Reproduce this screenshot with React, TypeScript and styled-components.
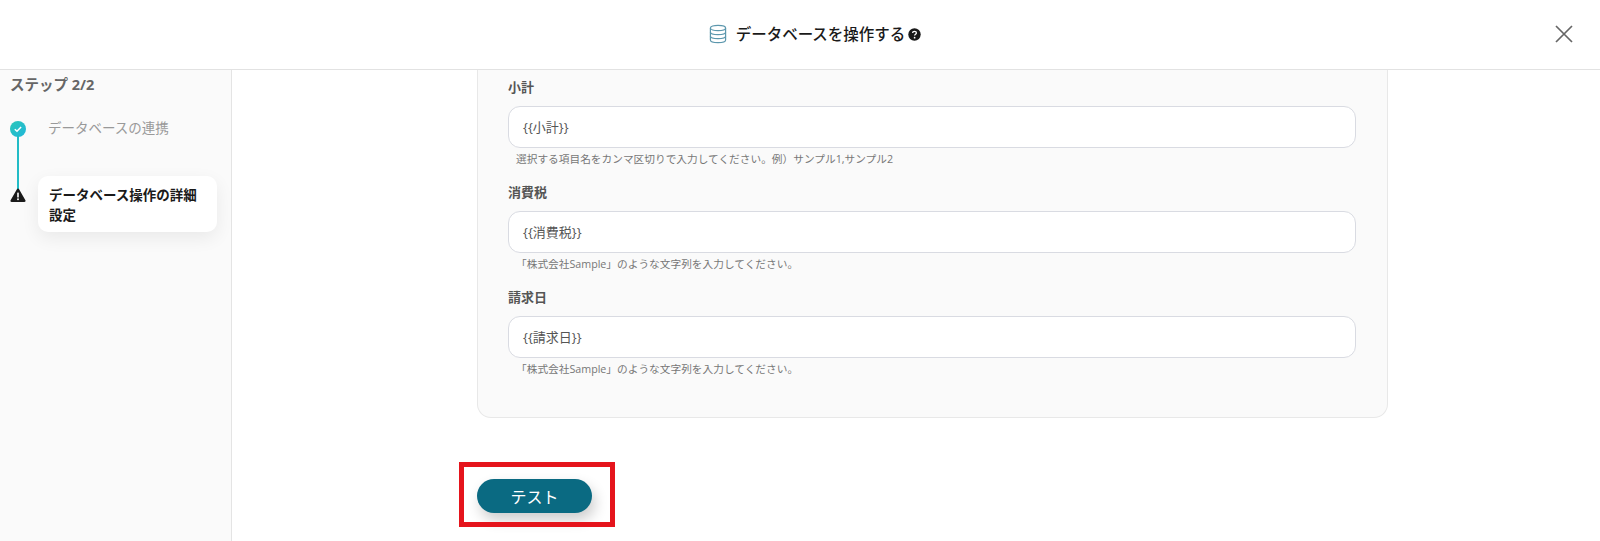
import React from "react";
import styled, { createGlobalStyle } from "styled-components";

const Global = createGlobalStyle`
  html, body { margin: 0; padding: 0; background: #fff; }
  body { font-family: "Open Sans", "Noto Sans CJK JP", sans-serif; }
  #root { width: 1600px; height: 541px; overflow: hidden; }
  * { box-sizing: border-box; }
`;

const Page = styled.div`
  width: 1600px;
  height: 541px;
  display: flex;
  flex-direction: column;
`;

const Header = styled.header`
  height: 70px;
  flex: none;
  border-bottom: 1px solid #e2e2e2;
  display: flex;
  align-items: center;
  justify-content: center;
  position: relative;
`;

const TitleGroup = styled.div`
  display: flex;
  align-items: center;
  gap: 8px;
  margin-left: 29px;
  margin-bottom: 1px;
`;

const Title = styled.h1`
  margin: 0;
  font-size: 15.5px;
  line-height: 20px;
  font-weight: 500;
  color: #1a1a1a;
`;

const CloseButton = styled.button`
  position: absolute;
  right: 25px;
  top: 23px;
  width: 22px;
  height: 22px;
  padding: 0;
  border: 0;
  background: none;
  display: flex;
  color: #666;
`;

const Body = styled.div`
  flex: 1;
  display: flex;
  min-height: 0;
`;

const Sidebar = styled.aside`
  width: 232px;
  flex: none;
  background: #fafafa;
  border-right: 1px solid #e4e4e4;
  padding: 5px 14px 0 10px;
`;

const StepHeading = styled.div`
  font-size: 14.5px;
  line-height: 20px;
  font-weight: 700;
  color: #666;
`;

const Steps = styled.ol`
  list-style: none;
  margin: 26px 0 0;
  padding: 0;
  position: relative;
`;

const StepRow = styled.li<{ $h: number }>`
  display: flex;
  align-items: flex-start;
  height: ${(p) => p.$h}px;
  position: relative;
`;

const Connector = styled.span`
  position: absolute;
  left: 7px;
  top: 14px;
  width: 2px;
  height: 54px;
  background: #22bcc6;
`;

const Marker = styled.span`
  width: 16px;
  height: 16px;
  flex: none;
  display: flex;
  position: relative;
`;

const DoneLabel = styled.span`
  margin-left: 22px;
  font-size: 13.5px;
  line-height: 14px;
  color: #999;
`;

const ActiveCard = styled.div`
  margin-left: 12px;
  width: 179px;
  height: 56px;
  margin-top: -11px;
  padding: 9px 10px 0 11px;
  background: #fff;
  border-radius: 10px;
  box-shadow: 0 6px 18px rgba(0, 0, 0, 0.07);
  font-size: 13.5px;
  line-height: 20px;
  font-weight: 700;
  color: #1a1a1a;
`;

const Main = styled.main`
  flex: 1;
  min-width: 0;
  padding-left: 245px;
  overflow: hidden;
`;

const FormCard = styled.section`
  width: 911px;
  height: 348px;
  padding: 7px 31px 0 30px;
  background: #fafafa;
  border: 1px solid #e8e8e8;
  border-top: 0;
  border-radius: 0 0 14px 14px;
`;

const Field = styled.div`
  height: 105px;
`;

const FieldLabel = styled.label`
  display: block;
  height: 20px;
  font-size: 13px;
  line-height: 20px;
  font-weight: 700;
  color: #555;
`;

const TextInput = styled.div`
  height: 42px;
  margin-top: 9px;
  padding: 0 14px;
  background: #fff;
  border: 1px solid #d9dbe2;
  border-radius: 12px;
  font-size: 13px;
  line-height: 40px;
  color: #555;
`;

const Hint = styled.p`
  margin: 3px 0 0 8px;
  font-size: 10.7px;
  line-height: 16px;
  color: #777;
`;

const ActionRow = styled.div`
  position: relative;
  margin-top: 61px;
  width: 115px;
`;

const TestButton = styled.button`
  width: 115px;
  height: 34px;
  padding: 0;
  border: 0;
  border-radius: 17px;
  background: #0a6a82;
  color: #fff;
  font-family: inherit;
  font-size: 16px;
  box-shadow: 3px 7px 14px rgba(0, 0, 0, 0.2);
`;

const Highlight = styled.span`
  position: absolute;
  left: -18px;
  top: -17px;
  width: 156px;
  height: 65px;
  border: 5px solid #e5141c;
  pointer-events: none;
`;

const fields = [
  { label: "小計", value: "{{小計}}", hint: "選択する項目名をカンマ区切りで入力してください。例）サンプル1,サンプル2" },
  { label: "消費税", value: "{{消費税}}", hint: "「株式会社Sample」のような文字列を入力してください。" },
  { label: "請求日", value: "{{請求日}}", hint: "「株式会社Sample」のような文字列を入力してください。" },
];

const DatabaseIcon = () => (
  <svg width="20" height="20" viewBox="0 0 20 20" fill="none" stroke="#5c97ad" strokeWidth="1.2">
    <ellipse cx="10" cy="4" rx="7.6" ry="2.6" />
    <path d="M2.4 4v12c0 1.5 3.4 2.7 7.6 2.7s7.6-1.2 7.6-2.7V4" />
    <path d="M2.4 8c0 1.5 3.4 2.7 7.6 2.7S17.6 9.5 17.6 8" />
    <path d="M2.4 12c0 1.5 3.4 2.7 7.6 2.7s7.6-1.2 7.6-2.7" />
  </svg>
);

const HelpIcon = () => (
  <svg width="13" height="13" viewBox="0 0 13 13" style={{ marginLeft: -5 }}>
    <circle cx="6.5" cy="6.5" r="6.2" fill="#1a1a1a" />
    <path d="M4.6 5.1c0-1.1.9-1.7 1.9-1.7s1.9.6 1.9 1.6c0 1.3-1.8 1.3-1.8 2.6" fill="none" stroke="#fff" strokeWidth="1.3" />
    <circle cx="6.6" cy="9.7" r=".85" fill="#fff" />
  </svg>
);

const CheckMarker = () => (
  <svg width="16" height="16" viewBox="0 0 16 16">
    <defs>
      <linearGradient id="done" x1="0" y1="0" x2="1" y2="1">
        <stop offset="0" stopColor="#2cc7b8" />
        <stop offset="1" stopColor="#1fb6da" />
      </linearGradient>
    </defs>
    <circle cx="8" cy="8" r="8" fill="url(#done)" />
    <path d="M4.8 8.2l2.2 2.1 4.1-4.3" fill="none" stroke="#fff" strokeWidth="1.5" />
  </svg>
);

const WarningMarker = () => (
  <svg width="16" height="16" viewBox="0 0 16 16">
    <path d="M8 1.5c.5 0 .9.3 1.1.7l6.3 11c.5.8-.1 1.700-1 1.700H1.600c-.9 0-1.500-.9-1-1.700l6.300-11c.2-.4.6-.7 1.100-.7z" fill="#1a1a1a" />
    <rect x="7.2" y="5.5" width="1.6" height="5" rx=".6" fill="#fff" />
    <circle cx="8" cy="12.3" r=".95" fill="#fff" />
  </svg>
);

export default function App() {
  return (
    <Page>
      <Global />
      <Header>
        <TitleGroup>
          <DatabaseIcon />
          <Title>データベースを操作する</Title>
          <HelpIcon />
        </TitleGroup>
        <CloseButton aria-label="閉じる">
          <svg width="22" height="22" viewBox="0 0 22 22" stroke="currentColor" strokeWidth="1.7" fill="none">
            <path d="M3 3l16 16M19 3L3 19" />
          </svg>
        </CloseButton>
      </Header>
      <Body>
        <Sidebar>
          <StepHeading>ステップ 2/2</StepHeading>
          <Steps>
            <StepRow $h={66}>
              <Marker><CheckMarker /></Marker>
              <Connector />
              <DoneLabel>データベースの連携</DoneLabel>
            </StepRow>
            <StepRow $h={56}>
              <Marker><WarningMarker /></Marker>
              <ActiveCard>データベース操作の詳細設定</ActiveCard>
            </StepRow>
          </Steps>
        </Sidebar>
        <Main>
          <FormCard>
            {fields.map((f) => (
              <Field key={f.label}>
                <FieldLabel>{f.label}</FieldLabel>
                <TextInput>{f.value}</TextInput>
                <Hint>{f.hint}</Hint>
              </Field>
            ))}
          </FormCard>
          <ActionRow>
            <TestButton>テスト</TestButton>
            <Highlight />
          </ActionRow>
        </Main>
      </Body>
    </Page>
  );
}
